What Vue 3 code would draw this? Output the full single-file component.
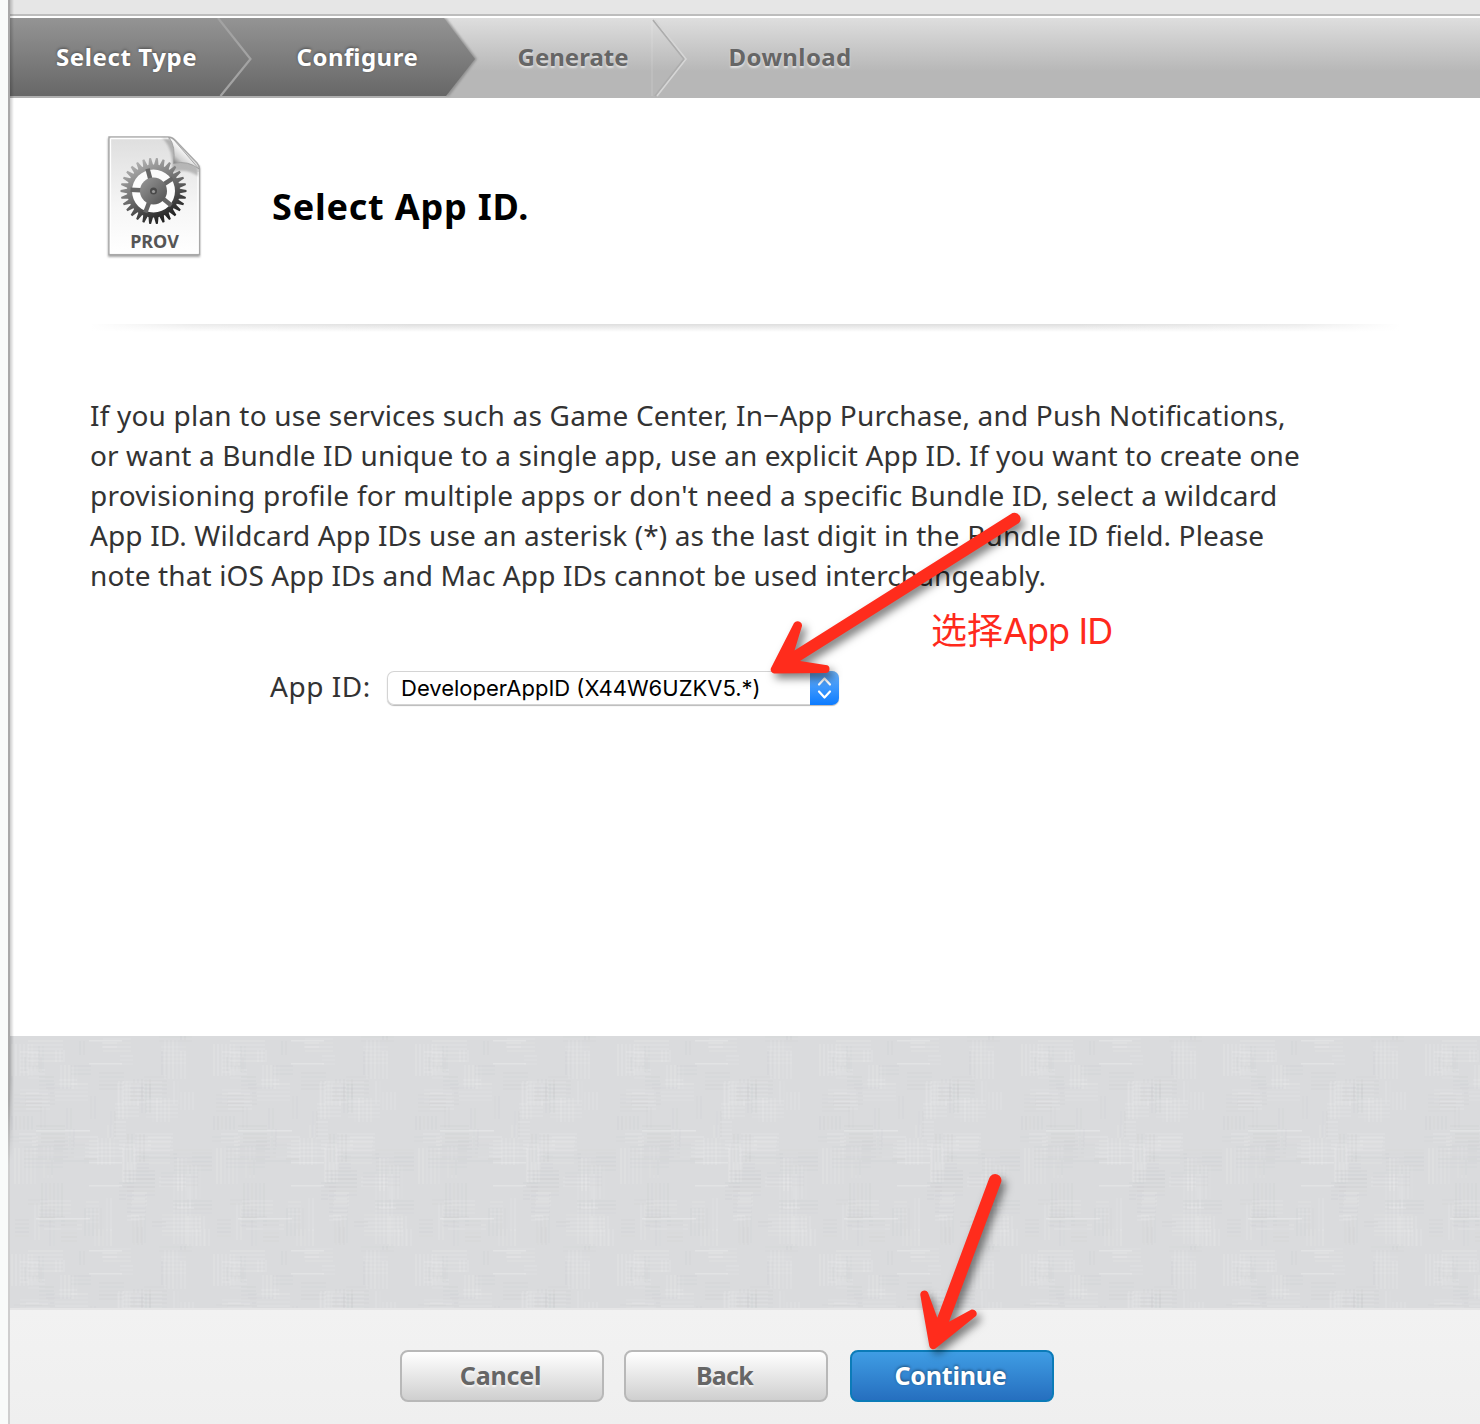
<script setup>
const paragraph = [
  'If you plan to use services such as Game Center, In−App Purchase, and Push Notifications,',
  'or want a Bundle ID unique to a single app, use an explicit App ID. If you want to create one',
  "provisioning profile for multiple apps or don't need a specific Bundle ID, select a wildcard",
  'App ID. Wildcard App IDs use an asterisk (*) as the last digit in the Bundle ID field. Please',
  'note that iOS App IDs and Mac App IDs cannot be used interchangeably.',
]

// gear outline with evenly spaced teeth
const gearTeeth = (() => {
  const n = 30
  let d = ''
  for (let i = 0; i < n; i++) {
    const a = (i / n) * Math.PI * 2
    const p = (r, o) => `${(r * Math.cos(a + o)).toFixed(2)} ${(r * Math.sin(a + o)).toFixed(2)}`
    d += `${i ? 'L' : 'M'}${p(26.5, -0.085)}L${p(33, -0.03)}L${p(33, 0.03)}L${p(26.5, 0.085)}`
  }
  return d + 'Z'
})()
const spokes = [183, 255, 327, 39, 111]

// linen weave: patches of short horizontal and vertical threads
const threads = (() => {
  let s = 7
  const rnd = () => (s = (s * 16807) % 2147483647) / 2147483647
  const out = []
  for (let i = 0; i < 110; i++) {
    const horizontal = rnd() > 0.45
    const x = Math.floor(rnd() * 185)
    const y = Math.floor(rnd() * 195)
    const len = 12 + Math.floor(rnd() * 30)
    const color = rnd() > 0.45 ? '#fff' : '#b4b8bb'
    const count = 2 + Math.floor(rnd() * 5)
    for (let k = 0; k < count; k++) {
      out.push({
        x: horizontal ? x : x + k * 4,
        y: horizontal ? y + k * 4 : y,
        w: horizontal ? len : 2,
        h: horizontal ? 2 : len,
        color,
        o: 0.04 + rnd() * 0.07,
      })
    }
  }
  for (const y of [4, 27, 126, 149]) out.push({ x: 79, y, w: 33, h: 1.5, color: '#fff', o: 0.22 })
  for (const y of [94, 182]) out.push({ x: 26, y, w: 54, h: 1.5, color: '#fff', o: 0.25 })
  return out
})()
</script>

<template>
  <div class="page">
    <div class="gutter"></div>
    <main class="main">
      <div class="topstrip"></div>
      <nav class="steps">
        <svg class="steps-bg" width="1470" height="80" viewBox="10 18 1470 80">
          <defs>
            <linearGradient id="dark" x1="0" y1="0" x2="0" y2="1">
              <stop offset="0" stop-color="#949494" />
              <stop offset="1" stop-color="#676767" />
            </linearGradient>
            <filter id="soft" x="-5%" y="-10%" width="110%" height="120%"><feGaussianBlur stdDeviation="1.2" /></filter>
          </defs>
          <path d="M10 18H446L477 59L449 96H10Z" fill="#777" opacity=".6" filter="url(#soft)" />
          <path d="M10 18H444L475 59L446 96H10Z" fill="url(#dark)" />
          <path d="M218 18L250.500 59L220.500 96" fill="none" stroke="#a3a3a3" stroke-width="2.200" />
          <path d="M653 20L684 59L655 96" fill="none" stroke="#adadad" stroke-width="1.900" />
          <path d="M655 20L686 59L657 96" fill="none" stroke="#d6d6d6" stroke-width="1.600" />
          <path d="M652 20V96" stroke="#fff" stroke-opacity=".2" />
          <path d="M10 97H446" stroke="#b0b0b0" stroke-width="2" />
        </svg>
        <span class="step done s1">Select Type</span>
        <span class="step done s2">Configure</span>
        <span class="step s3">Generate</span>
        <span class="step s4">Download</span>
      </nav>

      <section class="content">
        <header class="head">
          <svg class="prov" width="104" height="132" viewBox="102 130 104 132">
            <defs>
              <linearGradient id="paper" x1="0" y1="0" x2="0" y2="1">
                <stop offset="0" stop-color="#dedede" />
                <stop offset=".6" stop-color="#f6f6f6" />
                <stop offset="1" stop-color="#fff" />
              </linearGradient>
              <linearGradient id="gear" gradientUnits="userSpaceOnUse" x1="-16" y1="-30" x2="14" y2="30">
                <stop offset="0" stop-color="#b2b2b2" />
                <stop offset=".5" stop-color="#6a6a6a" />
                <stop offset="1" stop-color="#1c1c1c" />
              </linearGradient>
              <linearGradient id="hub" x1="0" y1="0" x2="1" y2="1">
                <stop offset="0" stop-color="#999" />
                <stop offset="1" stop-color="#505050" />
              </linearGradient>
              <linearGradient id="fold" gradientUnits="userSpaceOnUse" x1="174" y1="166" x2="187" y2="151">
                <stop offset="0" stop-color="#666" />
                <stop offset=".45" stop-color="#d0d0d0" />
                <stop offset="1" stop-color="#fff" />
              </linearGradient>
              <filter id="psh" x="-10%" y="-10%" width="120%" height="120%"><feGaussianBlur stdDeviation="1.100" /></filter>
            </defs>
            <path d="M108 138H170L200 167V257H108Z" fill="#777" opacity=".65" filter="url(#psh)" />
            <path d="M109 137H168Q172 137 175 140L197 163Q199.500 166 199.500 169V254.500H109Z" fill="url(#paper)" stroke="#a9a9a9" stroke-width="1.400" />
            <path d="M110.500 138.500H168M110.500 138.500V253H198V172" fill="none" stroke="#fff" stroke-width="1.300" />
            <path d="M162 138Q174 148 172 172Q186 168 198 176V168L172 140Z" fill="#444" opacity=".3" filter="url(#psh)" />
            <path d="M169 137.500Q176 146 173.500 163.500Q188 160 199 169L174 140Q172 138 169 137.500Z" fill="url(#fold)" stroke="#999" stroke-width=".8" />
            <g transform="translate(153.500 191)">
              <circle r="22" fill="#fff" opacity=".8" />
              <path :d="gearTeeth + 'M21.5 0A21.5 21.5 0 1 0 -21.5 0A21.5 21.5 0 1 0 21.5 0Z'" fill="url(#gear)" fill-rule="evenodd" />
              <g stroke="#666" stroke-width="4.500">
                <path v-for="a in spokes" :key="a" d="M8 0H23" :transform="`rotate(${a})`" />
              </g>
              <circle r="13.500" fill="url(#hub)" />
              <circle r="3.500" fill="#4a4a4a" />
              <circle r="1.600" cy=".5" fill="#999" />
            </g>
            <text x="154.500" y="247.500" class="provtext" text-anchor="middle">PROV</text>
          </svg>
          <h1 class="title">Select App ID.</h1>
        </header>
        <div class="divider"></div>
        <p class="copy">
          <span v-for="(line, i) in paragraph" :key="i" class="line" :class="'l' + i">{{ line }}</span>
        </p>
        <div class="field">
          <label class="label">App ID:</label>
          <div class="select">
            <span class="value">DeveloperAppID (X44W6UZKV5.*)</span>
            <span class="knob">
              <svg width="29" height="34" viewBox="0 0 29 34">
                <path d="M9 13.500L14.500 7.500L20 13.500M9 20.500L14.500 26.500L20 20.500" fill="none" stroke="#fff" stroke-width="2.200" stroke-linecap="round" stroke-linejoin="round" />
              </svg>
            </span>
          </div>
        </div>
      </section>

      <div class="linen">
        <svg width="1470" height="272">
          <defs>
            <pattern id="weave" width="202" height="210" patternUnits="userSpaceOnUse">
              <rect v-for="(t, i) in threads" :key="i" :x="t.x" :y="t.y" :width="t.w" :height="t.h" :fill="t.color" :opacity="t.o" />
            </pattern>
          </defs>
          <rect width="1470" height="272" fill="url(#weave)" />
        </svg>
      </div>

      <footer class="footer">
        <button class="btn cancel">Cancel</button>
        <button class="btn back">Back</button>
        <button class="btn primary">Continue</button>
      </footer>
    </main>

    <div class="edge"></div>
    <span class="note"><span class="han">选择</span><span class="latin">App ID</span></span>
    <svg class="arrows" width="1480" height="1424" viewBox="0 0 1480 1424">
      <path d="M1012.500 513A6.200 6.200 0 0 1 1019 523L800 661L825.500 665A4 4 0 0 1 825.500 673L774 673.500A4 4 0 0 1 771 668L794 623A4.500 4.500 0 0 1 802 626L794.500 650.500Z" />
      <path d="M989.300 1178A6.200 6.200 0 0 1 1001 1182.500L949 1321.700L971.500 1309.500A4.300 4.300 0 0 1 976 1316L935.500 1348.500A4 4 0 0 1 929.300 1346L920.300 1295A4.200 4.200 0 0 1 928 1292.500L937.300 1317.700Z" />
    </svg>
  </div>
</template>

<style>
body {
  margin: 0;
  overflow: hidden;
}
</style>

<style scoped>
.page {
  position: relative;
  display: flex;
  width: 1480px;
  height: 1424px;
  overflow: hidden;
  background: #fff;
  font-family: "Noto Sans", "Open Sans", sans-serif;
  font-feature-settings: "liga" 1;
  color: #333;
}
.page svg { display: block; }
.gutter {
  flex: none;
  width: 10px;
  background: #f9fbfa;
}
.edge {
  position: absolute;
  left: 8px;
  top: 0;
  width: 8px;
  height: 1424px;
}
.edge::before,
.edge::after {
  content: "";
  position: absolute;
  top: 0;
}
.edge::before {
  left: 0;
  width: 2px;
  height: 100%;
  background: linear-gradient(#a9a9a9 1100px, #cfcfcf 1165px);
}
.edge::after {
  left: 2px;
  width: 4px;
  height: 1160px;
  background: linear-gradient(to right, rgba(0, 0, 0, 0.2), rgba(0, 0, 0, 0));
  -webkit-mask-image: linear-gradient(#000 1080px, transparent);
  mask-image: linear-gradient(#000 1080px, transparent);
}
.main {
  display: flex;
  flex-direction: column;
  width: 1470px;
}
.topstrip {
  height: 14px;
  background: #e6e6e6;
  border-bottom: 2px solid #bdbdbd;
  margin-bottom: 2px;
}
.steps {
  position: relative;
  display: flex;
  height: 80px;
  background: linear-gradient(#dedede, #b7b7b7 67%, #b7b7b7);
}
.steps-bg {
  position: absolute;
  left: 0;
  top: 0;
}
.step {
  position: relative;
  font-size: 24px;
  line-height: 78px;
  font-weight: 700;
  white-space: nowrap;
  color: #666;
  text-shadow: 0 2px 2px rgba(255, 255, 255, 0.6);
}
.done {
  color: #fff;
  text-shadow: 0 -1px 3px rgba(0, 0, 0, 0.4);
}
.s1 { width: 240.5px; margin-left: 46px; letter-spacing: 0.6px; }
.s2 { width: 221px; letter-spacing: 0.5px; }
.s3 { width: 211px; }
.s4 { letter-spacing: 0.4px; }
.content {
  height: 938px;
  box-sizing: border-box;
  padding: 32px 80px 0;
}
.head {
  display: flex;
  height: 194px;
}
.prov { margin-left: 12px; }
.provtext {
  font: 700 18px "Noto Sans", sans-serif;
  fill: #555;
}
.title {
  margin: 52px 0 0 66px;
  font-size: 36px;
  line-height: 50px;
  letter-spacing: 0.8px;
  color: #000;
}
.divider {
  width: 1310px;
  height: 8px;
  background:
    linear-gradient(to right, #fff, rgba(255, 255, 255, 0.4) 8%, rgba(255, 255, 255, 0) 25%, rgba(255, 255, 255, 0) 75%, rgba(255, 255, 255, 0.4) 92%, #fff),
    linear-gradient(#dedede, #fff);
}
.copy {
  margin: 63px 0 0;
  font-size: 28px;
  line-height: 40px;
}
.line {
  display: block;
  width: max-content;
  white-space: nowrap;
}
.l0 { letter-spacing: 0.2px; }
.l1 { letter-spacing: 0.095px; }
.l2 { letter-spacing: 0.23px; }
.l3 { letter-spacing: 0.13px; }
.l4 { letter-spacing: 0.12px; }
.field {
  display: flex;
  align-items: center;
  margin: 73px 0 0 180px;
  height: 40px;
}
.label {
  width: 117px;
  font-size: 28px;
  line-height: 40px;
  letter-spacing: 0.55px;
  white-space: nowrap;
  padding-bottom: 4px;
}
.select {
  display: flex;
  justify-content: space-between;
  width: 452px;
  height: 34px;
  border-radius: 7px;
  background: #fff;
  box-shadow: 0 0 0 1px #d4d4d4 inset, 0 1px 1px rgba(0, 0, 0, 0.28);
  font-family: Inter, sans-serif;
  font-size: 22px;
  line-height: 35px;
  color: #000;
  white-space: nowrap;
}
.value { margin-left: 14px; }
.knob {
  width: 29px;
  border-radius: 0 7px 7px 0;
  background: linear-gradient(#6cb3fa, #0c7bff);
}
.linen {
  height: 272px;
  background: #dadbdd;
  border-bottom: 2px solid #e5e5e6;
}
.footer {
  display: flex;
  height: 114px;
  box-sizing: border-box;
  padding: 40px 0 0 390px;
  background: linear-gradient(#f2f2f2, #efefef);
}
.btn {
  width: 204px;
  height: 52px;
  box-sizing: border-box;
  margin: 0 20px 0 0;
  padding: 0 3px 2px 0;
  border: 2px solid #b8b8b8;
  border-radius: 8px;
  background: linear-gradient(#fff, #cfcfcf);
  color: #666;
  font: 700 25px/46px "Noto Sans", sans-serif;
  letter-spacing: -0.2px;
  text-shadow: 0 2px 2px rgba(255, 255, 255, 0.8);
}
.back {
  margin-right: 22px;
  letter-spacing: -0.7px;
}
.primary {
  border-color: #0b7bb8;
  background: linear-gradient(#3f9de4, #266fbf);
  color: #fff;
  text-shadow: 0 -1px 3px rgba(0, 0, 0, 0.45);
}
.note {
  position: absolute;
  left: 931px;
  top: 602px;
  font-size: 36px;
  line-height: 52px;
  color: #ff2a1c;
  white-space: nowrap;
}
.han { font-family: "Noto Sans CJK SC", sans-serif; }
.latin {
  font-family: Inter, sans-serif;
  letter-spacing: -0.9px;
}
.arrows {
  position: absolute;
  left: 0;
  top: 0;
  fill: #ff2c1c;
  filter: drop-shadow(4px 5px 4px rgba(0, 0, 0, 0.5));
}
</style>
